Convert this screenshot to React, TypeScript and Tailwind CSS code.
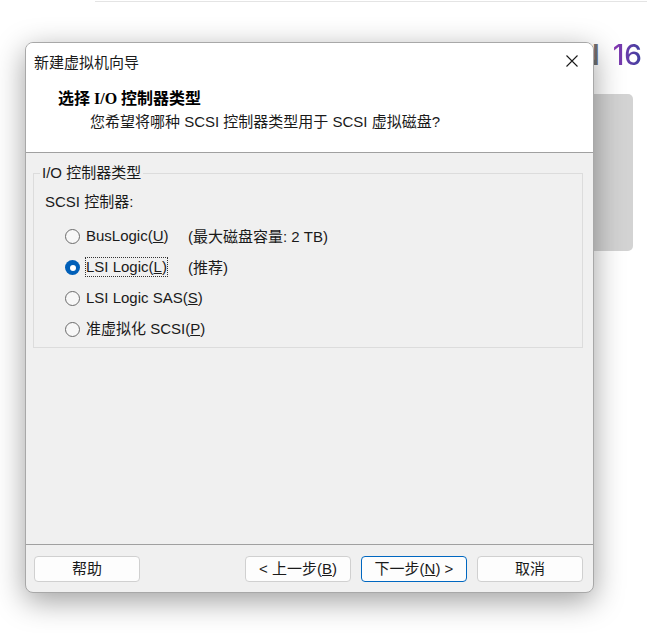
const ui = { fontFamily: '"Liberation Sans", "Noto Sans CJK SC", sans-serif' };
const serifTitle = { fontFamily: '"Liberation Serif", "Noto Sans CJK SC", serif' };

const options = [
  { label: 'BusLogic(', key: 'U', note: '(最大磁盘容量: 2 TB)', checked: false },
  { label: 'LSI Logic(', key: 'L', note: '(推荐)', checked: true },
  { label: 'LSI Logic SAS(', key: 'S', note: '', checked: false },
  { label: '准虚拟化 SCSI(', key: 'P', note: '', checked: false },
];

function Radio({ checked }: { checked: boolean }) {
  if (checked) {
    return (
      <div className="w-[15px] h-[15px] rounded-full bg-[#005fb8] flex items-center justify-center shrink-0">
        <div className="w-[6px] h-[6px] rounded-full bg-white" />
      </div>
    );
  }
  return <div className="w-[15px] h-[15px] rounded-full border border-[#6b6b6b] bg-[#f7f7f7] shrink-0" />;
}

function Button({ children, primary }: { children: React.ReactNode; primary?: boolean }) {
  return (
    <button
      className={
        'w-[106px] h-[26px] rounded-[4px] bg-[#fdfdfd] text-[15px] leading-[24px] text-[#1a1a1a] flex items-center justify-center border ' +
        (primary ? 'border-[#0067c0]' : 'border-[#d0d0d0]')
      }
    >
      {children}
    </button>
  );
}

export default function App() {
  return (
    <div className="relative w-[647px] h-[633px] bg-white overflow-hidden" style={ui}>
      {/* background: workstation start page */}
      <div className="absolute top-[1px] left-[95px] right-0 h-px bg-[#e4e4e4]" />
      <div
        className="absolute top-[38px] right-[5px] flex items-baseline gap-[8px] text-[28px] leading-[34px]"
        style={{ fontFamily: 'Inter, sans-serif' }}
      >
        <span className="tracking-[5px] text-[#707070] font-semibold">WORKSTATION</span>
        <span className="font-medium bg-gradient-to-r from-[#8a36b4] to-[#3b3f9e] bg-clip-text text-transparent">16</span>
      </div>
      <div className="absolute left-[580px] top-[94px] w-[53px] h-[157px] rounded-[5px] bg-[#d3d3d3]" />

      {/* dialog */}
      <div className="absolute left-[25px] top-[42px] w-[569px] h-[551px] rounded-[8px] border border-[#a8a8a8] bg-[#f0f0f0] shadow-[0_8px_30px_rgba(0,0,0,0.38)] flex flex-col overflow-hidden">
        {/* header */}
        <div className="h-[110px] bg-white border-b border-[#a0a0a0] shrink-0">
          <div className="h-[38px] flex items-center justify-between pl-[8px] pr-[14px]">
            <span className="text-[15px] leading-[20px] text-[#1a1a1a]" style={{ fontFamily: '"Noto Sans CJK SC", sans-serif' }}>
              新建虚拟机向导
            </span>
            <svg width="12" height="12" viewBox="0 0 12 12" className="mr-[1px] mb-[2px]">
              <path d="M0.5 0.5 L11.5 11.5 M11.5 0.5 L0.5 11.5" stroke="#1a1a1a" strokeWidth="1.1" fill="none" />
            </svg>
          </div>
          <div className="pl-[32px] pt-[8px]">
            <div className="h-[20px] text-[16px] leading-[20px] font-bold text-black" style={serifTitle}>
              选择 I/O 控制器类型
            </div>
            <div className="mt-[3px] pl-[32px] h-[20px] text-[15px] leading-[20px] text-[#1a1a1a]">
              您希望将哪种 SCSI 控制器类型用于 SCSI 虚拟磁盘?
            </div>
          </div>
        </div>

        {/* body */}
        <div className="flex-1 px-[7px] pt-[10px]">
          <fieldset className="w-[550px] h-[185px] border border-[#dcdcdc] pl-[6px] text-[15px] text-[#1a1a1a]">
            <legend className="px-[2px] leading-[20px]">I/O 控制器类型</legend>
            <div className="mt-[9px] ml-[5px] h-[20px] leading-[20px]">SCSI 控制器:</div>
            <div className="mt-[9px] flex flex-col">
              {options.map((o) => (
                <div key={o.key} className="h-[31px] flex items-center pl-[25px]">
                  <Radio checked={o.checked} />
                  <div className="w-[108px] shrink-0 pl-[5px] whitespace-nowrap">
                    <span
                      className={
                        'inline-block leading-[18px] border border-dotted ' +
                        (o.checked ? 'border-[#333]' : 'border-transparent')
                      }
                    >
                      {o.label}
                      <u>{o.key}</u>)
                    </span>
                  </div>
                  {o.note && <span className="whitespace-nowrap leading-[20px]">{o.note}</span>}
                </div>
              ))}
            </div>
          </fieldset>
        </div>

        {/* footer */}
        <div className="h-[48px] border-t border-[#a0a0a0] shrink-0 flex items-start pt-[11px] pl-[8px] pr-[10px]">
          <Button>帮助</Button>
          <div className="ml-auto flex gap-[10px]">
            <Button>
              &lt; 上一步(<u>B</u>)
            </Button>
            <Button primary>
              下一步(<u>N</u>) &gt;
            </Button>
            <Button>取消</Button>
          </div>
        </div>
      </div>
    </div>
  );
}
